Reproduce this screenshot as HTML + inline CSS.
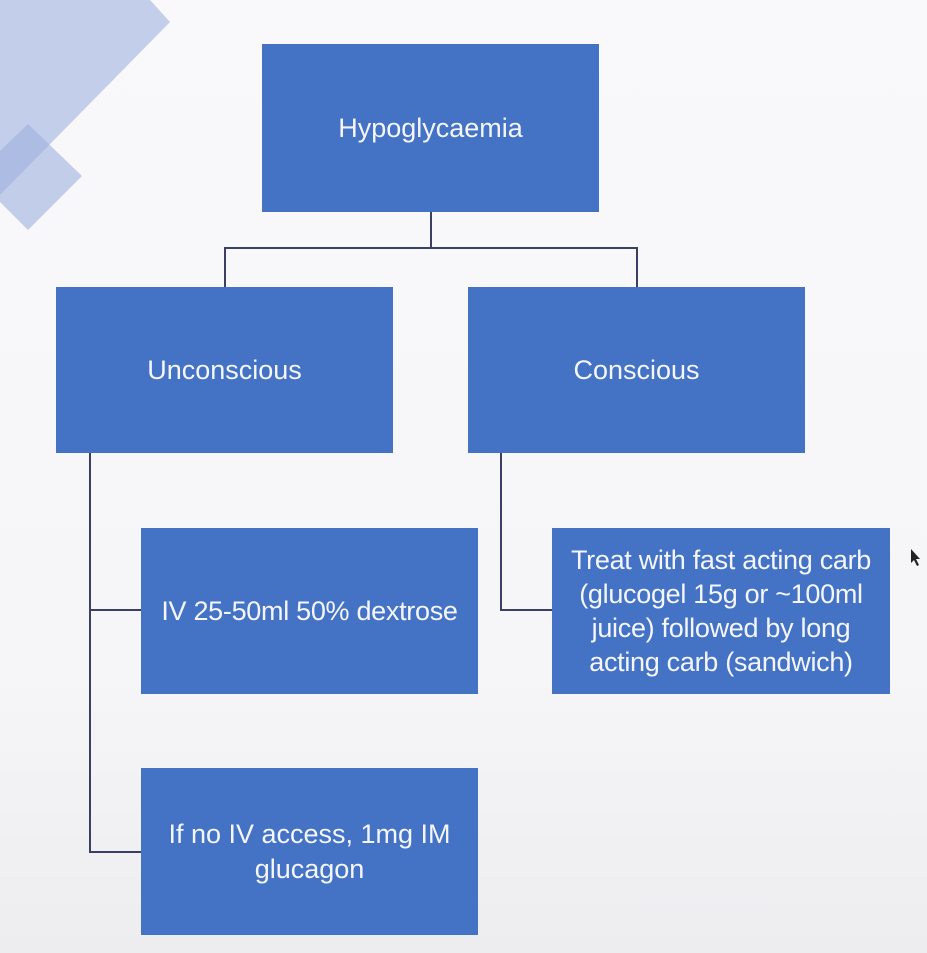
<!DOCTYPE html>
<html><head><style>
html,body{margin:0;padding:0;}
body{width:927px;height:953px;position:relative;overflow:hidden;background:linear-gradient(#f9f9fb 0%,#f6f6f8 70%,#ededf0 100%);font-family:"Liberation Sans",sans-serif;}
.b{position:absolute;background:#4472c4;color:#f4f6fb;display:flex;align-items:center;justify-content:center;text-align:center;font-size:27px;line-height:35px;box-sizing:border-box;white-space:nowrap;}
.l{position:absolute;background:#3b3f63;}
</style></head><body>
<svg width="927" height="953" style="position:absolute;left:0;top:0">
<polygon points="0,0 150,0 170,22 0,195" fill="#b9c7e6" opacity="0.85"/>
<polygon points="28,124 82,176 28,230 -26,176" fill="#9fb1de" opacity="0.6"/>
</svg>
<div class="l" style="left:430px;top:212px;width:2px;height:36px"></div>
<div class="l" style="left:224px;top:247px;width:414px;height:2px"></div>
<div class="l" style="left:224px;top:247px;width:2px;height:40px"></div>
<div class="l" style="left:636px;top:247px;width:2px;height:40px"></div>
<div class="l" style="left:89px;top:453px;width:2px;height:400px"></div>
<div class="l" style="left:89px;top:609px;width:52px;height:2px"></div>
<div class="l" style="left:89px;top:851px;width:52px;height:2px"></div>
<div class="l" style="left:500px;top:453px;width:2px;height:158px"></div>
<div class="l" style="left:500px;top:609px;width:52px;height:2px"></div>
<div class="b" style="left:262px;top:44px;width:337px;height:168px">Hypoglycaemia</div>
<div class="b" style="left:56px;top:287px;width:337px;height:166px">Unconscious</div>
<div class="b" style="left:468px;top:287px;width:337px;height:166px">Conscious</div>
<div class="b" style="left:141px;top:528px;width:337px;height:166px;font-size:27px;letter-spacing:-0.3px">IV 25-50ml 50% dextrose</div>
<div class="b" style="left:552px;top:528px;width:338px;height:166px;font-size:27px;line-height:34px;letter-spacing:-0.3px">Treat with fast acting carb<br>(glucogel 15g or ~100ml<br>juice) followed by long<br>acting carb (sandwich)</div>
<div class="b" style="left:141px;top:768px;width:337px;height:167px">If no IV access, 1mg IM<br>glucagon</div>
<svg width="14" height="20" style="position:absolute;left:910px;top:548px"><path d="M1,1 L1,15 L4,12 L7,18 L9,17 L6,11 L10,11 Z" fill="#222"/></svg>
</body></html>
